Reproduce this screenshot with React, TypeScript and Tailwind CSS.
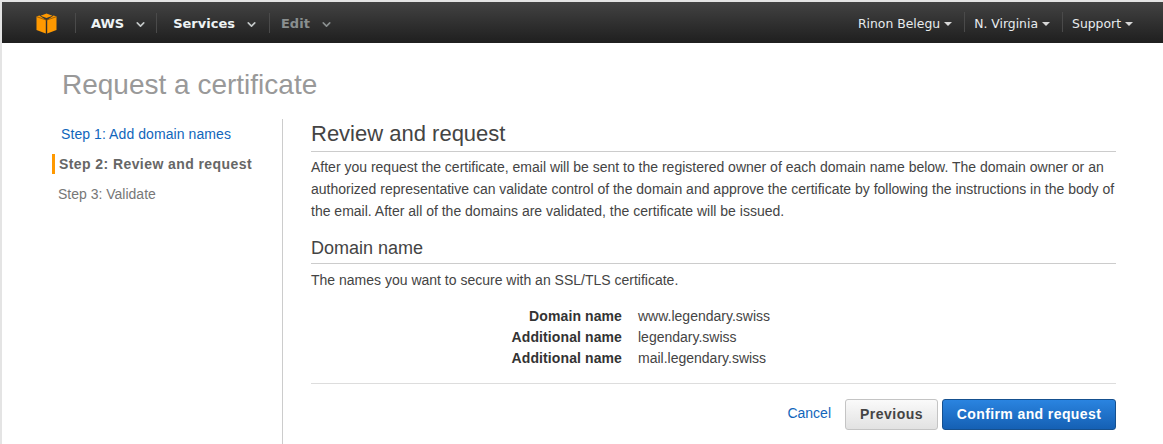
import { ChevronDown } from 'lucide-react'

function Divider() {
  return <span className="h-[20px] w-px bg-[#4a4a4a]" />
}

function NavMenu({ label, dim, className }: { label: string; dim?: boolean; className: string }) {
  return (
    <div className={`flex items-center gap-[10px] pt-[3px] text-[13px] font-bold ${className} ${dim ? 'text-[#8a8f8f]' : 'text-[#eef3f5]'}`}>
      <span>{label}</span>
      <ChevronDown size={13} strokeWidth={3} className={dim ? 'text-[#8a8f8f]' : 'text-[#c4c8c8]'} />
    </div>
  )
}

function RightMenu({ label }: { label: string }) {
  return (
    <div className="flex items-center gap-[4px] pl-[9px] pr-[12px] pt-[3px] text-[12.4px] text-[#e8ecee]">
      <span>{label}</span>
      <span className="mt-[1px] h-0 w-0 border-x-[4px] border-t-[4px] border-x-transparent border-t-[#d8d8d8]" />
    </div>
  )
}

function SummaryRow({ label, value }: { label: string; value: string }) {
  return (
    <div className="flex h-[21px] items-center text-[14px]">
      <div className="w-[311px] text-right font-bold tracking-[0.1px] text-[#333333]">{label}</div>
      <div className="ml-[16px] text-[#444444]">{value}</div>
    </div>
  )
}

export default function App() {
  return (
    <div className="h-[444px] w-[1163px] overflow-hidden border-l-2 border-t-2 border-[#e4e4e4] bg-white font-['Liberation_Sans',Arial,sans-serif]">
      <header className="flex h-[41px] items-center bg-gradient-to-b from-[#434343] to-[#1f1f1f] font-['DejaVu_Sans',Verdana,sans-serif]">
        <div className="flex w-[73px] justify-end pr-[18px] pt-[2px]">
          <svg width="21" height="21" viewBox="0 0 21 21">
            <path d="M10.5 0.5 L16.5 2.8 L10.5 5.1 L4.5 2.8 Z" fill="#ff9900" />
            <path d="M0.5 3.6 L3.4 2.6 L9.8 7 L9.8 20.6 L0.5 17 Z" fill="#ff9900" />
            <path d="M20.5 3.6 L17.6 2.6 L11.2 7 L11.2 20.6 L20.5 17 Z" fill="#ff9900" />
            <path d="M1 3.8 L10.5 7.2 L20 3.8" fill="none" stroke="#7a4c08" strokeWidth="0.7" />
          </svg>
        </div>
        <Divider />
        <NavMenu label="AWS" className="pl-[15px] pr-[9px]" />
        <Divider />
        <NavMenu label="Services" className="pl-[16px] pr-[11px]" />
        <Divider />
        <NavMenu label="Edit" dim className="pl-[11px] pr-[12px]" />
        <div className="ml-auto flex items-center pr-[18px]">
          <RightMenu label="Rinon Belegu" />
          <Divider />
          <RightMenu label="N. Virginia" />
          <Divider />
          <RightMenu label="Support" />
        </div>
      </header>

      <main className="pl-[60px] pr-[47px]">
        <h1 className="pt-[24px] text-[28px] leading-[36px] text-[#999999]">Request a certificate</h1>
        <div className="mt-[16px] flex">
          <nav className="flex h-[325px] w-[221px] flex-col border-r border-[#cccccc] text-[14px]">
            <a className="ml-[-1px] flex h-[30px] items-center tracking-[0.08px] text-[#1166bb]">Step 1: Add domain names</a>
            <div className="ml-[-10px] flex h-[30px] items-center">
              <span className="h-[20px] w-[3px] bg-[#ff9900]" />
              <span className="ml-[4px] font-bold tracking-[0.42px] text-[#666666]">Step 2: Review and request</span>
            </div>
            <div className="ml-[-4px] flex h-[30px] items-center text-[#777777]">Step 3: Validate</div>
          </nav>

          <section className="ml-[28px] flex-1">
            <h2 className="border-b border-[#cccccc] pb-[3px] text-[22px] leading-[29px] text-[#444444]">Review and request</h2>
            <p className="mt-[4px] text-[14px] leading-[22px] text-[#444444]">
              After you request the certificate, email will be sent to the registered owner of each domain name below. The domain owner or an authorized representative can validate control of the domain and approve the certificate by following the instructions in the body of the email. After all of the domains are validated, the certificate will be issued.
            </p>
            <h3 className="mt-[15px] border-b border-[#cccccc] pb-[3px] text-[18px] leading-[23px] text-[#444444]">Domain name</h3>
            <p className="mt-[6px] text-[14px] leading-[20px] text-[#444444]">The names you want to secure with an SSL/TLS certificate.</p>
            <div className="mt-[16px]">
              <SummaryRow label="Domain name" value="www.legendary.swiss" />
              <SummaryRow label="Additional name" value="legendary.swiss" />
              <SummaryRow label="Additional name" value="mail.legendary.swiss" />
            </div>
            <div className="mt-[14px] flex items-center justify-end border-t border-[#dddddd] pt-[15px]">
              <a className="mb-[2px] text-[14px] text-[#1166bb]">Cancel</a>
              <button className="ml-[14px] h-[31px] w-[93px] rounded-[3px] border border-[#c4c4c4] bg-gradient-to-b from-[#fafafa] to-[#e2e2e2] text-[14px] font-bold tracking-[0.5px] text-[#444444]">Previous</button>
              <button className="ml-[4px] h-[31px] w-[174px] rounded-[3px] border border-[#15508f] bg-gradient-to-b from-[#2a84e0] to-[#1560b4] text-[14px] font-bold tracking-[0.4px] text-white">Confirm and request</button>
            </div>
          </section>
        </div>
      </main>
    </div>
  )
}
